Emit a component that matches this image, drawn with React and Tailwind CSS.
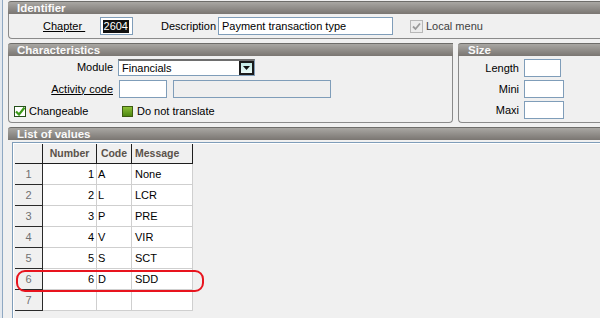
import React from 'react';

const rows = [
    { n: 1, code: 'A', msg: 'None' },
    { n: 2, code: 'L', msg: 'LCR' },
    { n: 3, code: 'P', msg: 'PRE' },
    { n: 4, code: 'V', msg: 'VIR' },
    { n: 5, code: 'S', msg: 'SCT' },
    { n: 6, code: 'D', msg: 'SDD' },
    { n: 7, code: '', msg: '' },
];

function PanelHeader({ title, pad = 'pl-[9px]' }) {
    return (
        <div className={`h-[13px] shrink-0 border-t border-[#6e6d6a] rounded-tl-[3px] bg-linear-to-b from-[#a9a7a3] to-[#7a7672] text-[#fafafa] font-bold text-[11.5px] leading-[12px] ${pad}`}>
            {title}
        </div>
    );
}

function Field({ className = '', children }) {
    return (
        <div className={`h-[18px] border border-[#7f9db9] bg-white flex items-center px-[3px] ${className}`}>
            {children}
        </div>
    );
}

export default function App() {
    return (
        <div className="w-[600px] h-[318px] bg-[#f0f0f0] flex overflow-hidden font-['Liberation_Sans',Arial,sans-serif] text-[11px] leading-[13px] text-black">
            {/* bord gauche */}
            <div className="w-[2px] bg-[#e3e8ee]" />
            <div className="w-[1px] bg-[#8fa8c2]" />
            <div className="w-[5px]" />

            <div className="flex-1 flex flex-col pt-[1px] min-w-0">
                {/* Identifier */}
                <PanelHeader title="Identifier" />
                <div className="h-[25px] border-l border-b border-[#8a8a8a] rounded-bl-[4px] flex items-center">
                    <span className="ml-[34px] w-[44px] underline whitespace-pre">Chapter </span>
                    <Field className="ml-[13px] w-[33px] justify-end">
                        <span className="bg-[#111] text-white px-[1px]">2604</span>
                    </Field>
                    <span className="ml-[28px] w-[52px]">Description</span>
                    <Field className="ml-[5px] w-[175px]">Payment transaction type</Field>
                    <div className="ml-[17px] w-[13px] h-[13px] border border-[#b7b7b7] bg-[#ececec] flex items-center justify-center">
                        <svg width="9" height="9" viewBox="0 0 9 9">
                            <path d="M1 4.5 L3.5 7 L8 1.5" fill="none" stroke="#9a9a9a" strokeWidth="1.8" />
                        </svg>
                    </div>
                    <span className="ml-[3px] text-[#404040]">Local menu</span>
                </div>

                <div className="mt-[4px] flex gap-[5px]">
                    {/* Characteristics */}
                    <div className="w-[445px] flex flex-col">
                        <PanelHeader title="Characteristics" />
                        <div className="h-[67px] border-l border-r border-b border-[#8a8a8a] rounded-b-[4px] flex flex-col pt-[3px]">
                            <div className="flex items-center h-[17px]">
                                <span className="w-[104px] text-right">Module</span>
                                <div className="ml-[5px] w-[137px] h-[17px] flex bg-white border border-[#7f9db9] border-t-2 border-t-[#6e6e6e]">
                                    <span className="flex-1 pl-[3px] leading-[14px]">Financials</span>
                                    <div className="w-[15px] h-full border-2 border-[#1c1c1c] bg-linear-to-b from-[#c2ebe6] to-[#ecfaf7] flex items-center justify-center">
                                        <svg width="7" height="5" viewBox="0 0 7 5">
                                            <path d="M0 0 H7 L3.5 4 Z" fill="#111" />
                                        </svg>
                                    </div>
                                </div>
                            </div>
                            <div className="flex items-center mt-[4px]">
                                <span className="w-[104px] text-right underline">Activity code</span>
                                <Field className="ml-[6px] w-[48px]" />
                                <div className="ml-[6px] w-[158px] h-[18px] border border-[#7f9db9] bg-[#efefef]" />
                            </div>
                            <div className="flex items-center mt-[7px] pl-[5px]">
                                <div className="w-[108px] flex items-center">
                                    <div className="w-[12px] h-[11px] border border-[#25501a] bg-white flex items-center justify-center">
                                        <svg width="10" height="9" viewBox="0 0 10 9">
                                            <path d="M1 4.5 L4 7.5 L9.5 0.5" fill="none" stroke="#3c9a18" strokeWidth="2.2" />
                                        </svg>
                                    </div>
                                    <span className="ml-[3px]">Changeable</span>
                                </div>
                                <div className="w-[11px] h-[11px] border border-[#3e5c12] bg-linear-to-b from-[#8cc036] to-[#4d8710]" />
                                <span className="ml-[4px]">Do not translate</span>
                            </div>
                        </div>
                    </div>

                    {/* Size */}
                    <div className="flex-1 flex flex-col">
                        <PanelHeader title="Size" pad="pl-[10px]" />
                        <div className="h-[67px] border-l border-b border-[#8a8a8a] rounded-bl-[4px] flex flex-col pt-[3px] gap-[3px]">
                            <div className="flex items-center">
                                <span className="w-[60px] text-right">Length</span>
                                <Field className="ml-[5px] w-[37px]" />
                            </div>
                            <div className="flex items-center">
                                <span className="w-[60px] text-right">Mini</span>
                                <Field className="ml-[5px] w-[40px]" />
                            </div>
                            <div className="flex items-center">
                                <span className="w-[60px] text-right">Maxi</span>
                                <Field className="ml-[5px] w-[40px]" />
                            </div>
                        </div>
                    </div>
                </div>

                {/* List of values */}
                <div className="mt-[4px] flex flex-col flex-1">
                    <PanelHeader title="List of values" />
                    <div className="ml-[4px] mt-[2px] flex-1 border-l border-t border-[#7f9db9]">
                        <div className="h-full border-l border-t border-white pl-[1px]">
                            <div className="relative w-[178px] flex flex-col">
                                <div className="flex h-[20px] bg-[#f0f0f0] border-b border-[#1e1e1e] font-bold text-[10.5px] text-[#5a524a]">
                                    <div className="w-[28px] border-r border-[#1e1e1e]" />
                                    <div className="w-[54px] border-r border-[#1e1e1e] flex items-center justify-center">Number</div>
                                    <div className="w-[35px] border-r border-[#1e1e1e] flex items-center justify-center">Code</div>
                                    <div className="w-[61px] border-r border-[#1e1e1e] flex items-center pl-[3px]">Message</div>
                                </div>
                                {rows.map((r) => (
                                    <div key={r.n} className="flex h-[21px]">
                                        <div className="w-[28px] bg-[#f0f0f0] border-r border-b border-[#2a2a2a] flex items-center justify-center text-[#707070]">
                                            {r.n}
                                        </div>
                                        <div className="w-[54px] bg-white border-r border-b border-[#cfcfcf] flex items-center justify-end pr-[2px]">
                                            {r.code ? r.n : ''}
                                        </div>
                                        <div className="w-[35px] bg-white border-r border-b border-[#cfcfcf] flex items-center pl-[1px]">
                                            {r.code}
                                        </div>
                                        <div className="w-[61px] bg-white border-r border-b border-[#cfcfcf] flex items-center pl-[3px]">
                                            {r.msg}
                                        </div>
                                    </div>
                                ))}
                                {/* surlignage rouge */}
                                <div className="absolute left-[1px] top-[126px] w-[188px] h-[22px] border-2 border-[#e8141e] rounded-[9px]" />
                            </div>
                        </div>
                    </div>
                </div>
            </div>
        </div>
    );
}
